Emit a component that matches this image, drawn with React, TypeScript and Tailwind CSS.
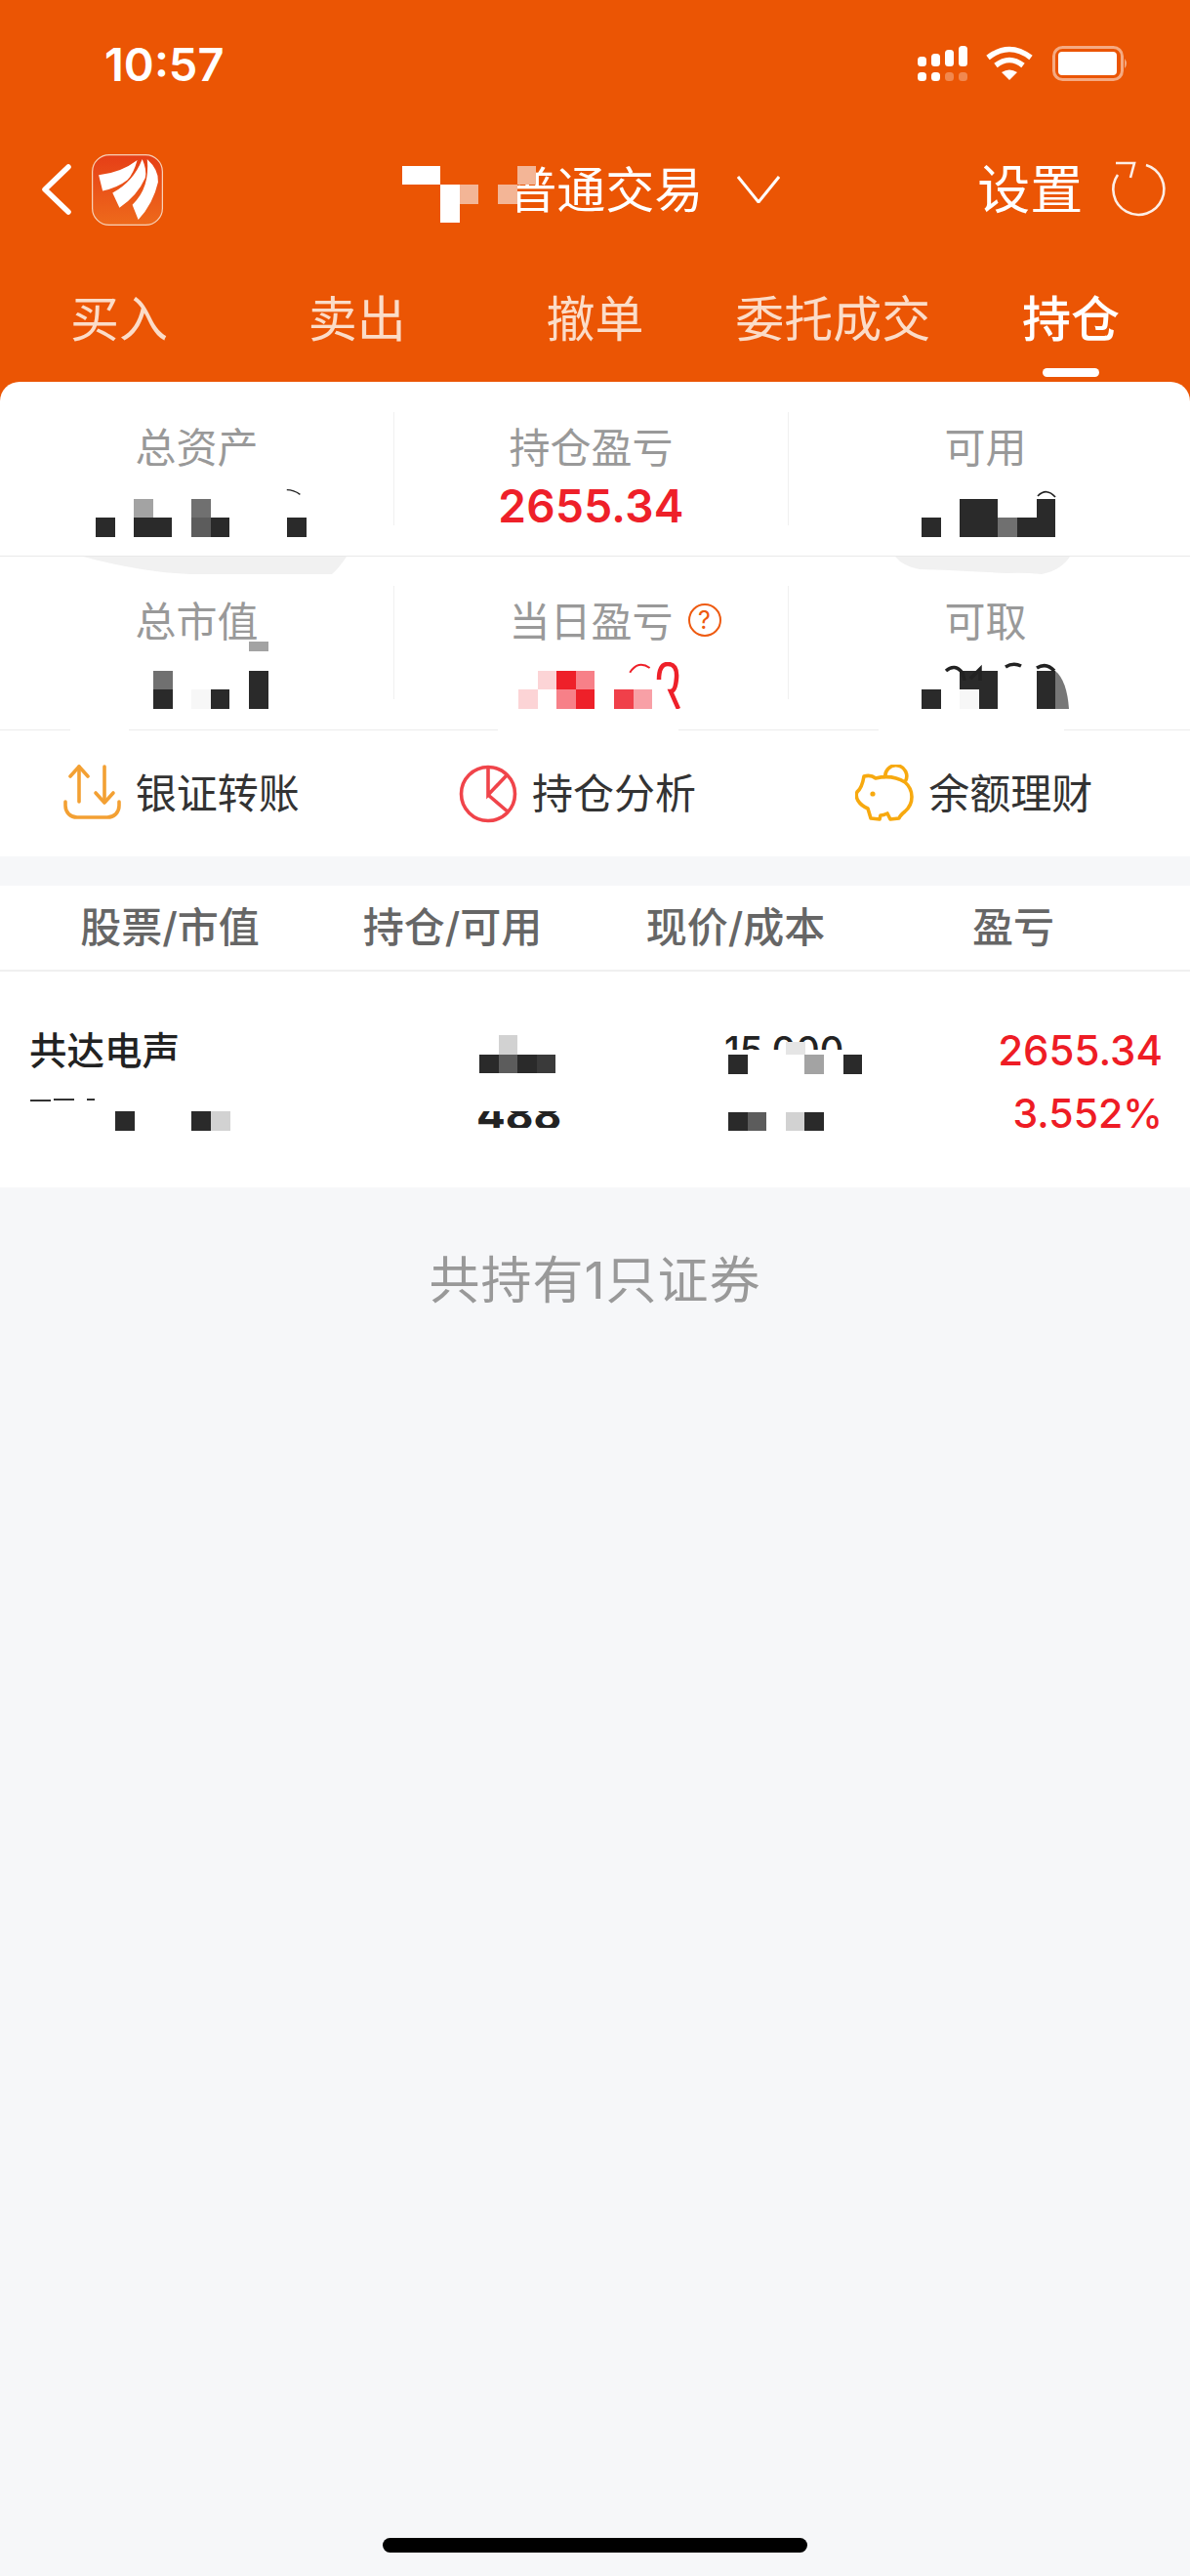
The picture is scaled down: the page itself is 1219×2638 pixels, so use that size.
import type { ReactNode } from 'react';

const shades: Record<string, string> = {
  '.': 'bg-transparent',
  c: 'bg-[#eb5504]',
  d: 'bg-[#2a2a2a]',
  n: 'bg-[#3a3a3a]',
  m: 'bg-[#5c5c5c]',
  g: 'bg-[#707070]',
  a: 'bg-[#a3a3a3]',
  l: 'bg-[#d2d2d2]',
  f: 'bg-[#f7f7f7]',
  w: 'bg-white',
  o: 'bg-[#f3b596]',
  r: 'bg-[#ee2029]',
  s: 'bg-[#f0404a]',
  t: 'bg-[#f78088]',
  u: 'bg-[#f8a0a6]',
  v: 'bg-[#fcd4d6]',
};

const Mosaic = ({ rows, className = '', children }: { rows: string[]; className?: string; children?: ReactNode }) => (
  <div className={`relative w-fit ${className}`}>
    {rows.map((row, i) => (
      <div key={i} className="flex">
        {row.split('').map((c, j) => (
          <div key={j} className={`w-[19.6px] h-[19.6px] ${shades[c]}`} />
        ))}
      </div>
    ))}
    {children}
  </div>
);

const Scratch = ({ d, className, color = '#222' }: { d: string; className: string; color?: string }) => (
  <svg viewBox="0 0 40 20" className={`absolute ${className}`} fill="none">
    <path d={d} stroke={color} strokeWidth="3.5" />
  </svg>
);

const Logo = () => (
  <svg viewBox="0 0 72 72" className="w-[73px] h-[73px] ml-[21px]">
    <defs>
      <linearGradient id="logoFill" x1="0" y1="0" x2="0" y2="1">
        <stop offset="0" stopColor="#e63f17" />
        <stop offset="1" stopColor="#ee6a1b" />
      </linearGradient>
    </defs>
    <rect x="0.6" y="0.6" width="70.8" height="70.8" rx="17" fill="url(#logoFill)" stroke="#f8d2b8" strokeWidth="1.2" />
    <path d="M46 6 Q42 20 36 26 Q26 34 11 37 L7 21 Q29 19 46 6Z" fill="#fff" />
    <path d="M51 5 Q56 16 54 24 Q46 42 28 54 L21 39 Q42 28 51 5Z" fill="#fff" />
    <path d="M56 5 Q68 16 67 28 Q62 50 47 66 L41 51 Q59 34 56 5Z" fill="#fff" />
  </svg>
);

const StatusIcons = () => (
  <div className="flex items-center gap-[19px]">
    <svg viewBox="0 0 51 36" className="w-[51px] h-[36px]" fill="#fff">
      <rect x="0" y="11" width="9" height="10" rx="3.5" />
      <rect x="14" y="8" width="9" height="13" rx="3.5" />
      <rect x="28" y="4" width="9" height="17" rx="3.5" />
      <rect x="42" y="0" width="9" height="21" rx="3.5" />
      <rect x="0" y="27" width="9" height="9" rx="3.5" />
      <rect x="14" y="27" width="9" height="9" rx="3.5" />
      <rect x="28" y="27" width="9" height="9" rx="3.5" opacity="0.3" />
      <rect x="42" y="27" width="9" height="9" rx="3.5" opacity="0.3" />
    </svg>
    <svg viewBox="0 0 48 36" className="w-[48px] h-[36px]" fill="none" stroke="#fff" strokeWidth="5.5">
      <path d="M2 12 Q24 -5 46 12" />
      <path d="M10 20 Q24 9 38 20" />
      <path d="M24 35 L16 27 Q24 22 32 27Z" fill="#fff" stroke="none" />
    </svg>
    <svg viewBox="0 0 78 36" className="w-[78px] h-[36px] ml-px" fill="none">
      <rect x="1.5" y="1.5" width="70" height="33" rx="9" stroke="#fff" strokeOpacity="0.5" strokeWidth="3" />
      <rect x="6" y="6" width="60" height="24" rx="4" fill="#fff" />
      <path d="M74 13 Q78 18 74 23Z" fill="#fff" fillOpacity="0.5" />
    </svg>
  </div>
);

const tabs = ['买入', '卖出', '撤单', '委托成交', '持仓'];

const Header = () => (
  <div className="bg-[#eb5504] text-white h-[411px]">
    <div className="h-[130px] flex items-center justify-between pl-[107px] pr-[63px]">
      <span className="text-[47px] leading-none font-semibold">10:57</span>
      <StatusIcons />
    </div>
    <div className="h-[128px] flex items-center pl-[43px]">
      <svg viewBox="0 0 30 52" className="w-[30px] h-[52px]" fill="none" stroke="#fff" strokeWidth="5.5" strokeLinecap="round" strokeLinejoin="round">
        <path d="M27 3 L3 26 L27 49" />
      </svg>
      <Logo />
      <Mosaic rows={['ww...co', '..wo.o.', '..w..c.']} className="ml-[245px] -mr-[29px] mt-[10px] z-10" />
      <span className="text-[50px] leading-none pt-[2px] whitespace-nowrap">普通交易</span>
      <svg viewBox="0 0 44 28" className="w-[44px] h-[28px] ml-[35px]" fill="none" stroke="#fff" strokeWidth="3">
        <path d="M1 1 L22 27 L43 1" />
      </svg>
      <span className="text-[54px] leading-none pt-[2px] ml-[202px] w-[108px] whitespace-nowrap">设置</span>
      <svg viewBox="0 0 60 60" className="w-[60px] h-[60px] ml-[28px]" fill="none" stroke="#fff" strokeOpacity="0.9" strokeWidth="2.6">
        <path d="M37 5 A26 26 0 1 1 8 15" />
        <path d="M6 3 L25 3 L21 18" />
      </svg>
    </div>
    <div className="grid grid-cols-5 pt-[45px]">
      {tabs.map((t) => (
        <div key={t} className="flex flex-col items-center">
          <span
            className={
              t === '持仓'
                ? 'text-[50px] leading-[48px] font-medium text-white'
                : 'text-[50px] leading-[48px] text-[#fbdcc8]'
            }
          >
            {t}
          </span>
          {t === '持仓' && <div className="w-[58px] h-[9px] mt-[26px] rounded-full bg-white" />}
        </div>
      ))}
    </div>
  </div>
);

const Stat = ({ label, first, hint, children }: { label: string; first?: boolean; hint?: boolean; children: ReactNode }) => (
  <div className={first ? 'h-[116px] pt-[17px]' : 'h-[116px] pt-[17px] border-l border-[#f0f0f0]'}>
    <div className="flex justify-center text-[42px] leading-[40px] text-[#999999]">
      <span className="relative whitespace-nowrap">
        {label}
        {hint && (
          <span className="absolute left-[calc(100%+15px)] top-[1px] w-[34px] h-[34px] rounded-full border-2 border-[#ee5a10] text-[#ee5a10] text-[25px] leading-[30px] text-center">
            ?
          </span>
        )}
      </span>
    </div>
    <div className="mt-[11px] h-[60px] flex flex-col justify-end">{children}</div>
  </div>
);

const Summary = () => (
  <div className="relative">
    <div className="grid grid-cols-[403px_404px_404px] pt-[31px] pb-[31px] border-b border-[#e9e9e9]">
      <Stat label="总资产" first>
        <Mosaic rows={['..a..g.....', 'd.dd.md...d']} className="ml-[98px]">
          <Scratch d="M2 4 Q20 4 36 16" className="left-[195px] top-[-11px] w-[16px] h-[8px]" />
        </Mosaic>
      </Stat>
      <Stat label="持仓盈亏">
        <div className="h-[60px] text-center text-[46px] leading-[56px] font-semibold tracking-[0.3px] text-[#ee2029]">2655.34</div>
      </Stat>
      <Stat label="可用">
        <Mosaic rows={['..dd..d', 'd.ddgdd']} className="ml-[136px]">
          <Scratch d="M2 16 Q20 -2 38 18" className="left-[118px] top-[-11px] w-[20px] h-[10px]" />
        </Mosaic>
      </Stat>
    </div>
    <div className="grid grid-cols-[403px_404px_404px] pt-[30px] pb-[31px] border-b border-[#ececec]">
      <Stat label="总市值" first>
        <Mosaic rows={['g....d', 'd.fd.d']} className="ml-[157px] mb-[2px]">
          <div className="absolute left-[98px] top-[-30px] w-[20px] h-[10px] bg-[#a3a3a3]" />
        </Mosaic>
      </Stat>
      <Stat label="当日盈亏" hint>
        <Mosaic rows={['.vrt...', 'v.tr.su']} className="ml-[127px] mb-[2px]">
          <Scratch d="M2 18 Q16 -4 36 10" color="#ee2029" className="left-[113px] top-[-9px] w-[24px] h-[12px]" />
          <svg viewBox="0 0 26 48" className="absolute left-[140px] top-[-9px] w-[26px] h-[48px]" fill="none" stroke="#ee2029" strokeWidth="4.5">
            <path d="M4 18 Q4 2 13 2 Q23 2 22 16 Q21 30 16 30 L24 48" />
          </svg>
        </Mosaic>
      </Stat>
      <Stat label="可取">
        <Mosaic rows={['..dd..d', 'd.fd..d']} className="ml-[136px] mb-[2px]">
          <svg viewBox="0 0 140 20" className="absolute left-0 top-[-10px] w-[140px] h-[20px]" fill="none" stroke="#222" strokeWidth="3.5">
            <path d="M25 10 Q34 2 42 12 L44 20" />
            <path d="M50 18 L60 8 L60 20" />
            <path d="M86 6 Q94 1 102 5" />
            <path d="M118 7 Q128 1 136 10" />
          </svg>
          <svg viewBox="0 0 14 39" className="absolute left-[137px] top-0 w-[14px] h-[39px]" fill="#777777">
            <path d="M0 0 Q12 10 14 39 H0Z" />
          </svg>
        </Mosaic>
      </Stat>
    </div>
    {/* smudges left by the redaction */}
    <svg viewBox="0 0 270 18" className="absolute left-[85px] top-[179px] w-[270px] h-[18px]" fill="#f1f1f1">
      <path d="M0 0 H270 Q262 12 255 18 H110 Q60 16 0 0Z" />
    </svg>
    <svg viewBox="0 0 179 18" className="absolute left-[917px] top-[179px] w-[179px] h-[18px]" fill="#f1f1f1">
      <path d="M0 0 H179 Q170 14 150 18 Q130 16 115 17 Q60 14 25 13 Q8 10 0 0Z" />
    </svg>
    <div className="absolute left-[72px] top-[354px] w-[60px] h-[4px] bg-white" />
    <div className="absolute left-[510px] top-[354px] w-[185px] h-[4px] bg-white" />
    <div className="absolute left-[900px] top-[354px] w-[190px] h-[4px] bg-white" />
  </div>
);

const actionText = 'text-[42px] leading-none text-[#333333] whitespace-nowrap';

const Actions = () => (
  <div className="h-[129px] grid grid-cols-3 bg-white">
    <div className="flex items-center justify-center gap-[15px] pr-[36px]">
      <svg viewBox="0 0 60 60" className="w-[60px] h-[60px]" fill="none" stroke="#f3a033" strokeWidth="3.6" strokeLinecap="round" strokeLinejoin="round">
        <path d="M8 12 L17 2 L26 12" />
        <path d="M17 2 V38" />
        <path d="M43 2 V38" />
        <path d="M34 29 L43 39 L52 29" />
        <path d="M3 38 V42 C3 49 8 54 15 54 H46 C53 54 58 49 58 42 V38" />
      </svg>
      <span className={actionText}>银证转账</span>
    </div>
    <div className="flex items-center justify-center gap-[15px] pr-[36px]">
      <svg viewBox="0 0 60 60" className="w-[60px] h-[60px]" fill="none" stroke="#f0444a" strokeWidth="3.6">
        <circle cx="30" cy="30" r="27.5" />
        <path d="M30 3 V31 L49 11" />
        <path d="M30 31 L51 49" />
      </svg>
      <span className={actionText}>持仓分析</span>
    </div>
    <div className="flex items-center justify-center gap-[15px] pr-[36px]">
      <svg viewBox="0 0 60 60" className="w-[60px] h-[60px]" fill="none" stroke="#f7a90f" strokeWidth="3.6" strokeLinejoin="round">
        <path d="M2 28 Q7 24 9 12 Q16 10 21 14 Q38 10 51 18 Q58 24 58 33 Q58 42 51 48 Q46 52 45 55 L36 56 L33 50 Q29 52 26 52 L25 56 L16 55 L13 45 Q6 42 3 37 Q0 32 2 28Z" />
        <path d="M31 14 A11 11 0 1 1 51.5 17" />
        <circle cx="18" cy="30" r="2.6" fill="#f7a90f" stroke="none" />
      </svg>
      <span className={actionText}>余额理财</span>
    </div>
  </div>
);

const columns = ['股票/市值', '持仓/可用', '现价/成本', '盈亏'];

const Holdings = () => (
  <div className="bg-white mt-[30px]">
    <div className="h-[88px] grid grid-cols-[290px_289px_291px_278px] pl-[29px] items-center border-b-2 border-[#f0f0f0]">
      {columns.map((c) => (
        <div key={c} className="text-center text-[42px] leading-[40px] font-medium text-[#666666]">
          {c}
        </div>
      ))}
    </div>
    <div className="h-[221px] flex pl-[31px]">
      <div className="w-[460px] shrink-0 pt-[61px]">
        <div className="-ml-px text-[38.5px] leading-[40px] font-medium text-[#222222]">共达电声</div>
        <Mosaic rows={['d...dl']} className="ml-[87px] mt-[42px]">
          <svg viewBox="0 0 66 3" className="absolute left-[-87px] top-[-13px] w-[66px] h-[3px]" fill="none" stroke="#333" strokeWidth="2">
            <path d="M0 2 H21 M24 1 H45 M58 1 H66" />
          </svg>
        </Mosaic>
      </div>
      <div className="w-[255px] shrink-0 pt-[65px]">
        <Mosaic rows={['.l..', 'dmdn']} />
        <div className="mt-[39px] -ml-[3px] h-[17px] w-[92px] overflow-hidden">
          <div className="-mt-[17px] text-[44px] leading-[40px] font-bold text-[#222222]">488</div>
        </div>
      </div>
      <div className="w-[270px] shrink-0 pt-[66px]">
        <div className="-ml-[4px] h-[14px] overflow-hidden">
          <div className="-mt-[6px] text-[38px] leading-[40px] font-medium text-[#222222]">15.000</div>
        </div>
        <Mosaic rows={['d...a.d']} className="mt-[5px]">
          <div className="absolute left-[59px] top-[-13px] w-[20px] h-[13px] bg-[#e5e5e5]" />
        </Mosaic>
        <Mosaic rows={['dm.ld']} className="mt-[39px]" />
      </div>
      <div className="flex-1 pt-[61px] pr-[28px] text-right leading-[40px] font-medium text-[#ee1c25] whitespace-nowrap">
        <div className="text-[42px]">2655.34</div>
        <div className="mt-[24px] text-[41px]">3.552%</div>
      </div>
    </div>
  </div>
);

const App = () => (
  <div className="w-[1219px] h-[2638px] flex flex-col bg-[#f6f7f9] font-['Inter','Noto_Sans_CJK_SC',sans-serif]">
    <Header />
    <div className="relative bg-white rounded-t-[20px] -mt-[20px]">
      <Summary />
      <Actions />
    </div>
    <Holdings />
    <div className="mt-[71px] text-center text-[52px] leading-[50px] tracking-[1px] text-[#999999]">共持有1只证券</div>
    <div className="mt-auto mb-[24px] mx-auto w-[435px] h-[15px] rounded-full bg-black" />
  </div>
);

export default App;
